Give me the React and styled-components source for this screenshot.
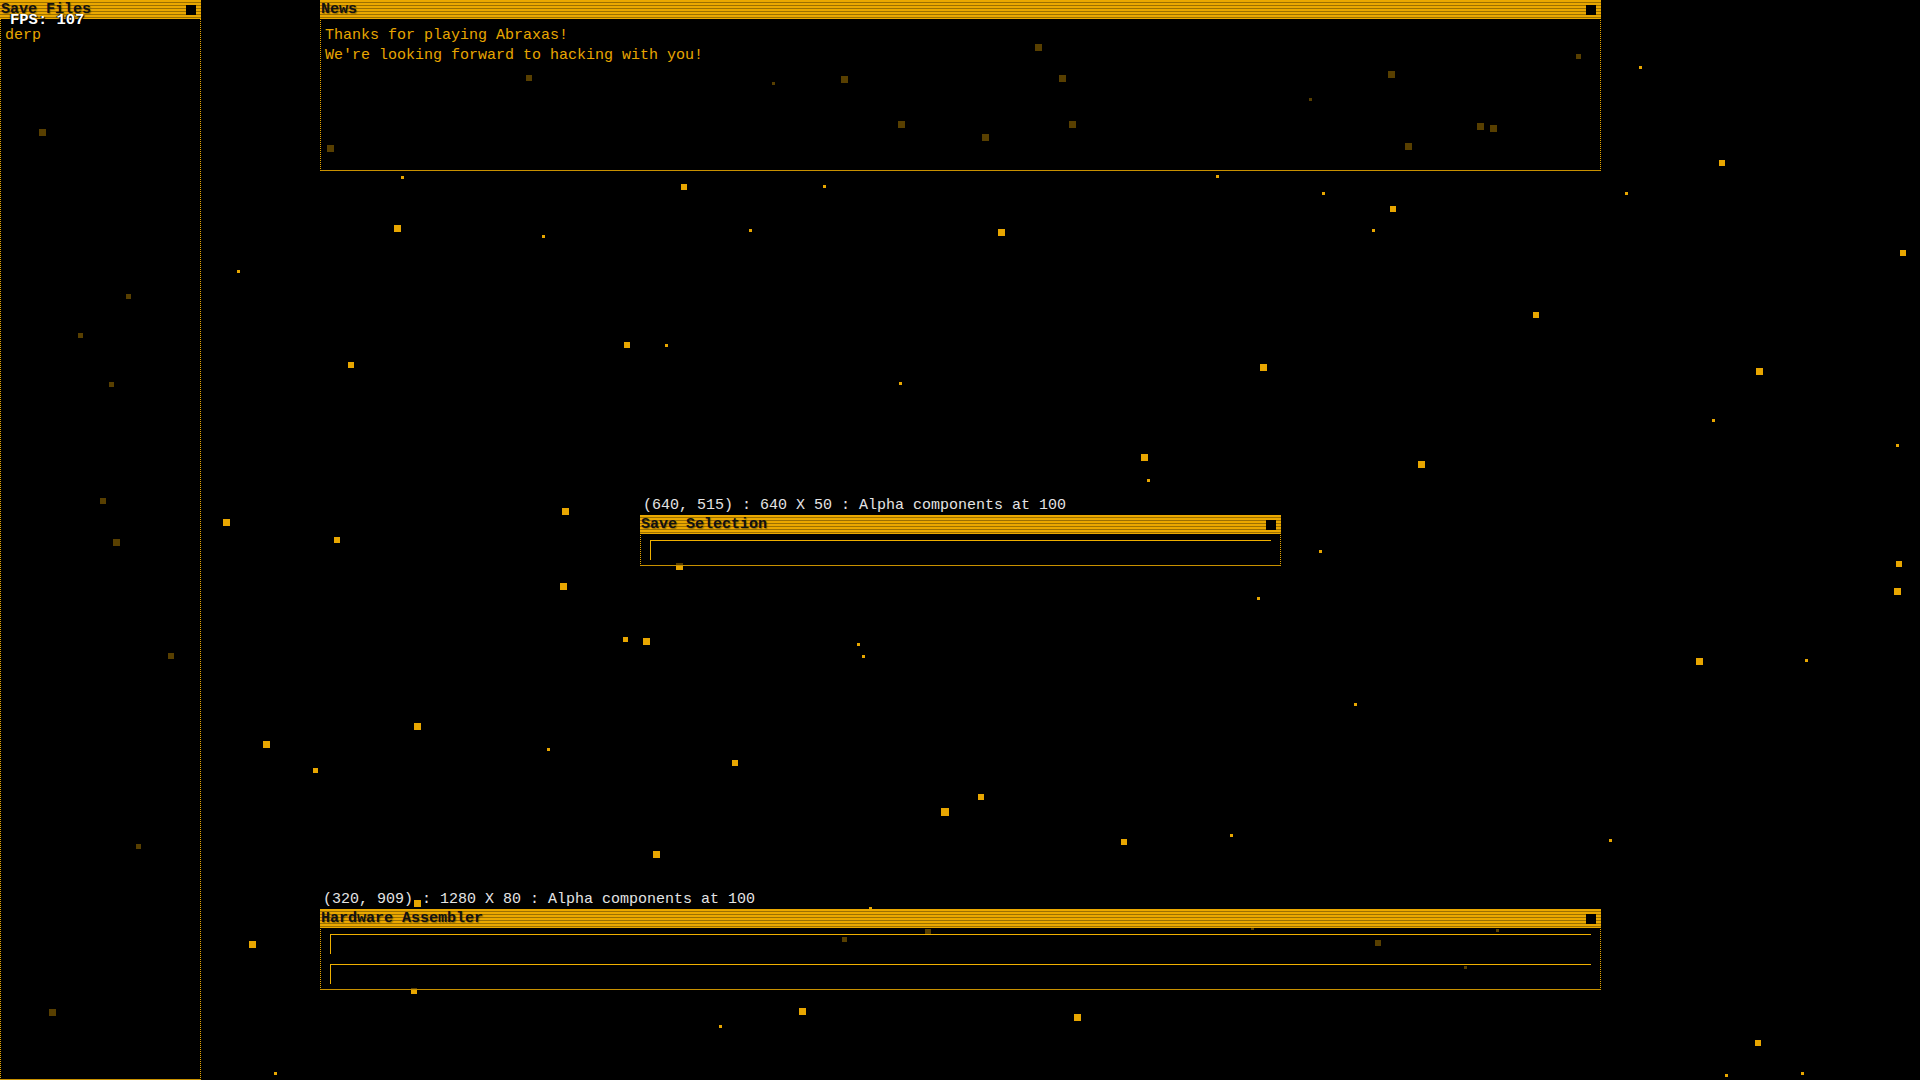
import styled, { createGlobalStyle } from "styled-components";

const SCALE = 1920 / 1568;

// particle positions read off the shrunk screenshot, size in px
const particles = [
    [329, 145, 3], [325, 187, 7], [444, 193, 3], [559, 153, 6], [613, 188, 3], [673, 152, 3],
    [818, 190, 7], [994, 144, 3], [1081, 158, 3], [1138, 171, 6], [1122, 188, 3], [1328, 158, 3],
    [1340, 55, 3], [1406, 133, 6], [1554, 207, 6], [195, 222, 3], [287, 298, 6], [512, 282, 6],
    [544, 282, 3], [735, 313, 3], [1032, 300, 7], [1254, 257, 6], [1437, 303, 7], [1399, 343, 3],
    [1550, 364, 3], [935, 374, 7], [938, 392, 3], [1161, 379, 7], [462, 418, 7], [185, 427, 7],
    [275, 441, 6], [460, 479, 7], [1078, 450, 3], [1028, 489, 3], [555, 463, 7], [1551, 461, 6],
    [1550, 483, 7], [511, 522, 5], [528, 524, 7], [701, 526, 3], [705, 536, 3], [1388, 540, 7],
    [1475, 539, 3], [1107, 575, 3], [218, 608, 7], [341, 593, 7], [258, 629, 5], [448, 612, 3],
    [600, 623, 6], [801, 651, 6], [772, 663, 8], [918, 688, 6], [1006, 682, 3], [1315, 686, 3],
    [536, 698, 7], [711, 742, 3], [341, 738, 7], [206, 771, 7], [338, 809, 6], [655, 826, 7],
    [880, 831, 7], [588, 838, 3], [1436, 852, 6], [1472, 877, 3], [1410, 878, 3], [225, 877, 3],
    // these sit behind the windows and show through dimmed
    [35, 108, 7], [105, 242, 5], [66, 274, 5], [91, 314, 5], [84, 409, 6], [95, 443, 7],
    [140, 536, 6], [113, 691, 5], [43, 827, 7], [270, 121, 7], [432, 64, 6], [632, 68, 3],
    [690, 65, 7], [736, 102, 7], [805, 112, 7], [848, 39, 7], [868, 64, 7], [876, 102, 7],
    [1070, 81, 3], [1136, 61, 7], [1150, 120, 7], [1209, 103, 7], [1220, 105, 7], [1289, 46, 5],
    [758, 761, 6], [690, 767, 5], [1125, 770, 6], [1197, 790, 3], [1023, 758, 3], [1223, 760, 3],
];

const GlobalStyle = createGlobalStyle`
    html, body {
        margin: 0;
        padding: 0;
        background: #000;
        overflow: hidden;
    }
`;

const Desktop = styled.div`
    position: relative;
    width: 1920px;
    height: 1080px;
    background: #000;
    font-family: "Liberation Mono", "DejaVu Sans Mono", monospace;
    overflow: hidden;
`;

const Particle = styled.div`
    position: absolute;
    background: #e8a600;
`;

const Window = styled.div`
    position: absolute;
    left: ${(p) => p.$x}px;
    top: ${(p) => p.$y}px;
    width: ${(p) => p.$w}px;
    height: ${(p) => p.$h}px;
    display: flex;
    flex-direction: column;
    box-sizing: border-box;
    background: rgba(0, 0, 0, 0.62);
    border-left: 1px dotted #e8a600;
    border-right: 1px dotted #e8a600;
    border-bottom: 1px solid #c89000;
`;

const TitleBar = styled.div`
    height: 19px;
    flex-shrink: 0;
    margin: 0 -1px;
    display: flex;
    align-items: center;
    justify-content: space-between;
    padding-right: 5px;
    background: repeating-linear-gradient(
        to bottom,
        #eaa800 0px,
        #eaa800 2px,
        #9c7000 2px,
        #9c7000 3px
    );
`;

const Title = styled.span`
    font-weight: bold;
    font-size: 15px;
    line-height: 19px;
    color: #111;
    padding-left: 1px;
    text-shadow: 1px 1px 1px rgba(0, 0, 0, 0.35);
    white-space: nowrap;
`;

const CloseBox = styled.div`
    width: 10px;
    height: 10px;
    background: #000;
`;

const Body = styled.div`
    flex: 1;
    padding: 7px 4px 5px;
    color: #e8a600;
    font-size: 15px;
    line-height: 20px;
    white-space: pre;
`;

const Fields = styled.div`
    flex: 1;
    display: flex;
    flex-direction: column;
    gap: 10px;
    padding: 6px 9px 0 9px;
`;

const Field = styled.div`
    height: 20px;
    box-sizing: border-box;
    border-top: 1px solid #f0b000;
    border-left: 1px solid #f0b000;
`;

const Caption = styled.div`
    position: absolute;
    left: 2px;
    bottom: 100%;
    margin-bottom: 1px;
    color: #e4e4e4;
    font-size: 15px;
    line-height: 16px;
    white-space: pre;
`;

const Fps = styled.div`
    position: absolute;
    left: 10px;
    top: 12px;
    color: #fff;
    font-weight: bold;
    font-size: 15.5px;
    line-height: 16px;
    text-shadow: 1px 1px 1px #000, -1px 0 1px #000;
`;

export default function App() {
    return (
        <Desktop>
            <GlobalStyle />
            {particles.map(([sx, sy, s], i) => (
                <Particle
                    key={i}
                    style={{
                        left: Math.round(sx * SCALE - s / 2),
                        top: Math.round(sy * SCALE - s / 2),
                        width: s,
                        height: s,
                    }}
                />
            ))}

            <Window $x={0} $y={0} $w={201} $h={1080}>
                <TitleBar>
                    <Title>Save Files</Title>
                    <CloseBox />
                </TitleBar>
                <Body>derp</Body>
            </Window>

            <Window $x={320} $y={0} $w={1281} $h={171}>
                <TitleBar>
                    <Title>News</Title>
                    <CloseBox />
                </TitleBar>
                <Body>
                    {"Thanks for playing Abraxas!\nWe're looking forward to hacking with you!"}
                </Body>
            </Window>

            <Window $x={640} $y={515} $w={641} $h={51}>
                <Caption>(640, 515) : 640 X 50 : Alpha components at 100</Caption>
                <TitleBar>
                    <Title>Save Selection</Title>
                    <CloseBox />
                </TitleBar>
                <Fields>
                    <Field />
                </Fields>
            </Window>

            <Window $x={320} $y={909} $w={1281} $h={81}>
                <Caption>(320, 909) : 1280 X 80 : Alpha components at 100</Caption>
                <TitleBar>
                    <Title>Hardware Assembler</Title>
                    <CloseBox />
                </TitleBar>
                <Fields>
                    <Field />
                    <Field />
                </Fields>
            </Window>

            <Fps>FPS: 107</Fps>
        </Desktop>
    );
}
